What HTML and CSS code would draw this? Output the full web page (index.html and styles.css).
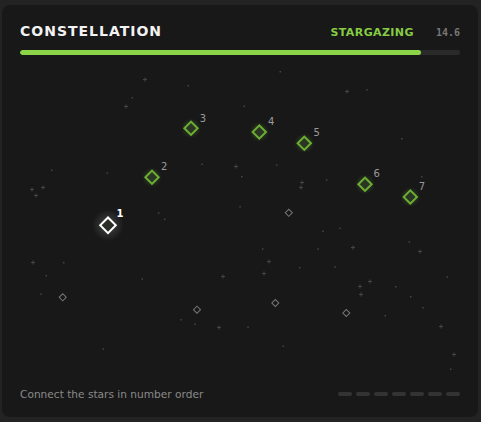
FILE: index.html
```html
<!DOCTYPE html>
<html>
<head>
<meta charset="utf-8">
<link rel="stylesheet" href="styles.css">
</head>
<body>
<div class="card">
  <div class="header">
    <div class="title">CONSTELLATION</div>
    <div class="status">
      <span class="mode">STARGAZING</span>
      <span class="value">14.6</span>
    </div>
  </div>
  <div class="bar"><div class="fill" style="width:91.1%"></div></div>
  <svg class="sky" width="476" height="331" viewBox="2 55 476 331" xmlns="http://www.w3.org/2000/svg">
    <defs>
      <radialGradient id="gw">
        <stop offset="0" stop-color="#ffffff" stop-opacity="0.22"/>
        <stop offset="0.6" stop-color="#ffffff" stop-opacity="0.08"/>
        <stop offset="1" stop-color="#ffffff" stop-opacity="0"/>
      </radialGradient>
      <radialGradient id="gg">
        <stop offset="0" stop-color="#7ccf3a" stop-opacity="0.3"/>
        <stop offset="1" stop-color="#7ccf3a" stop-opacity="0"/>
      </radialGradient>
    </defs>
    <g class="dots">
      <rect x="187.5" y="85" width="1.5" height="1.5"/>
      <rect x="131.5" y="97" width="1.5" height="1.5"/>
      <rect x="51" y="169.5" width="1.5" height="1.5"/>
      <rect x="106.5" y="172.3" width="1.5" height="1.5"/>
      <rect x="201.3" y="163.5" width="1.5" height="1.5"/>
      <rect x="158" y="212.3" width="1.5" height="1.5"/>
      <rect x="164" y="218.5" width="1.5" height="1.5"/>
      <rect x="239.3" y="206" width="1.5" height="1.5"/>
      <rect x="279.5" y="71" width="1.5" height="1.5"/>
      <rect x="366.3" y="89" width="1.5" height="1.5"/>
      <rect x="243.5" y="105.5" width="1.5" height="1.5"/>
      <rect x="401" y="138" width="1.5" height="1.5"/>
      <rect x="276" y="164.3" width="1.5" height="1.5"/>
      <rect x="241" y="176" width="1.5" height="1.5"/>
      <rect x="326" y="179.3" width="1.5" height="1.5"/>
      <rect x="421" y="176" width="1.5" height="1.5"/>
      <rect x="63" y="262" width="1.5" height="1.5"/>
      <rect x="45.5" y="275" width="1.5" height="1.5"/>
      <rect x="40.3" y="293.5" width="1.5" height="1.5"/>
      <rect x="141.5" y="278.3" width="1.5" height="1.5"/>
      <rect x="180.3" y="319" width="1.5" height="1.5"/>
      <rect x="194.3" y="323.5" width="1.5" height="1.5"/>
      <rect x="102.5" y="348.3" width="1.5" height="1.5"/>
      <rect x="322.3" y="230.5" width="1.5" height="1.5"/>
      <rect x="339.3" y="227.5" width="1.5" height="1.5"/>
      <rect x="262" y="248.3" width="1.5" height="1.5"/>
      <rect x="317.3" y="248.3" width="1.5" height="1.5"/>
      <rect x="299" y="267" width="1.5" height="1.5"/>
      <rect x="334.3" y="266.3" width="1.5" height="1.5"/>
      <rect x="408.5" y="241.3" width="1.5" height="1.5"/>
      <rect x="446.5" y="276.3" width="1.5" height="1.5"/>
      <rect x="395" y="286" width="1.5" height="1.5"/>
      <rect x="410" y="296" width="1.5" height="1.5"/>
      <rect x="422.3" y="307" width="1.5" height="1.5"/>
      <rect x="384.5" y="315" width="1.5" height="1.5"/>
      <rect x="247.3" y="326.5" width="1.5" height="1.5"/>
      <rect x="282.5" y="345.5" width="1.5" height="1.5"/>
      <rect x="450" y="368.5" width="1.5" height="1.5"/>
    </g>
    <path class="crosses" d="M143 79.5h4M145 77.5v4 M124 106.5h4M126 104.5v4 M30 189.5h4M32 187.5v4 M41 187.5h4M43 185.5v4 M34 195.5h4M36 193.5v4 M234 166.5h4M236 164.5v4 M345 91.5h4M347 89.5v4 M300 182.5h4M302 180.5v4 M299 187.5h4M301 185.5v4 M31 262.5h4M33 260.5v4 M221 276.5h4M223 274.5v4 M217 327.5h4M219 325.5v4 M351 247.5h4M353 245.5v4 M267 261.5h4M269 259.5v4 M262 273.5h4M264 271.5v4 M418 251.5h4M420 249.5v4 M368 281.5h4M370 279.5v4 M358 286.5h4M360 284.5v4 M359 294.5h4M361 292.5v4 M439 326.5h4M441 324.5v4 M452 354.5h4M454 352.5v4"/>
    <g class="faint">
      <rect x="286.3" y="210.3" width="5" height="5" transform="rotate(45 288.8 212.8)"/>
      <rect x="60.2" y="294.8" width="5" height="5" transform="rotate(45 62.7 297.3)"/>
      <rect x="194.5" y="307.2" width="5" height="5" transform="rotate(45 197 309.7)"/>
      <rect x="272.8" y="300.5" width="5" height="5" transform="rotate(45 275.3 303)"/>
      <rect x="343.8" y="310.5" width="5" height="5" transform="rotate(45 346.3 313)"/>
    </g>
    <circle cx="108" cy="225.3" r="16" fill="url(#gw)"/>
    <circle cx="152" cy="177.3" r="10" fill="url(#gg)"/>
    <circle cx="191" cy="128.3" r="10" fill="url(#gg)"/>
    <circle cx="259.3" cy="132" r="10" fill="url(#gg)"/>
    <circle cx="304.3" cy="143.3" r="10" fill="url(#gg)"/>
    <circle cx="365" cy="184.3" r="10" fill="url(#gg)"/>
    <circle cx="410.3" cy="197" r="10" fill="url(#gg)"/>
    <rect class="cur" x="102.5" y="219.8" width="11" height="11" transform="rotate(45 108 225.3)"/>
    <g class="green">
      <rect x="147.3" y="172.6" width="9.4" height="9.4" transform="rotate(45 152 177.3)"/>
      <rect x="186.3" y="123.6" width="9.4" height="9.4" transform="rotate(45 191 128.3)"/>
      <rect x="254.6" y="127.3" width="9.4" height="9.4" transform="rotate(45 259.3 132)"/>
      <rect x="299.6" y="138.6" width="9.4" height="9.4" transform="rotate(45 304.3 143.3)"/>
      <rect x="360.3" y="179.6" width="9.4" height="9.4" transform="rotate(45 365 184.3)"/>
      <rect x="405.6" y="192.3" width="9.4" height="9.4" transform="rotate(45 410.3 197)"/>
    </g>
    <text class="lbl lbl-cur" x="120" y="217">1</text>
    <text class="lbl" x="164.3" y="170">2</text>
    <text class="lbl" x="203" y="121.5">3</text>
    <text class="lbl" x="271.3" y="124.5">4</text>
    <text class="lbl" x="316.7" y="135.5">5</text>
    <text class="lbl" x="376.7" y="177">6</text>
    <text class="lbl" x="422" y="190">7</text>
  </svg>
  <div class="footer">
    <div class="hint">Connect the stars in number order</div>
    <div class="pips">
      <span class="pip"></span><span class="pip"></span><span class="pip"></span><span class="pip"></span><span class="pip"></span><span class="pip"></span><span class="pip"></span>
    </div>
  </div>
</div>
</body>
</html>
```
FILE: styles.css
```css
html, body {
  margin: 0;
  padding: 0;
  background: #232323;
}
body {
  font-family: "DejaVu Sans", sans-serif;
}
.card {
  box-sizing: border-box;
  width: 476px;
  height: 412px;
  margin: 5px 0 0 2px;
  padding: 18px 18px 15px;
  background: #181818;
  border-radius: 8px;
  display: flex;
  flex-direction: column;
}
.header {
  display: flex;
  justify-content: space-between;
  align-items: baseline;
  height: 17px;
}
.title {
  font-size: 14px;
  line-height: 17px;
  font-weight: bold;
  color: #f2f2f2;
  letter-spacing: 1px;
}
.status {
  display: flex;
  align-items: baseline;
  gap: 22px;
}
.mode {
  font-size: 11px;
  font-weight: bold;
  color: #86cc44;
  letter-spacing: 0.4px;
}
.value {
  font-family: "DejaVu Sans Mono", monospace;
  font-size: 10px;
  font-weight: bold;
  color: #777;
}
.bar {
  margin-top: 10px;
  height: 5px;
  border-radius: 3px;
  background: #2a2a2a;
  overflow: hidden;
}
.fill {
  height: 100%;
  background: #8bd448;
  border-radius: 3px;
}
.sky {
  display: block;
  margin: 0 -18px;
  flex: none;
}
.dots rect { fill: #444; }
.crosses { stroke: #444; stroke-width: 1; fill: none; }
.faint rect { fill: none; stroke: #777; stroke-width: 1; }
.cur { fill: #2a2e26; stroke: #ffffff; stroke-width: 2; }
.green rect { fill: #2b3524; stroke: #6cae34; stroke-width: 2; }
.lbl {
  font-family: "DejaVu Sans", sans-serif;
  font-size: 10px;
  fill: #9a9a9a;
  text-anchor: middle;
}
.lbl-cur { fill: #ffffff; font-weight: bold; }
.footer {
  display: flex;
  justify-content: space-between;
  align-items: center;
  height: 16px;
}
.hint {
  font-size: 10.6px;
  line-height: 16px;
  color: #8a8a8a;
}
.pips {
  display: flex;
  gap: 4px;
}
.pip {
  width: 14px;
  height: 4px;
  border-radius: 2px;
  background: #333;
}
```
